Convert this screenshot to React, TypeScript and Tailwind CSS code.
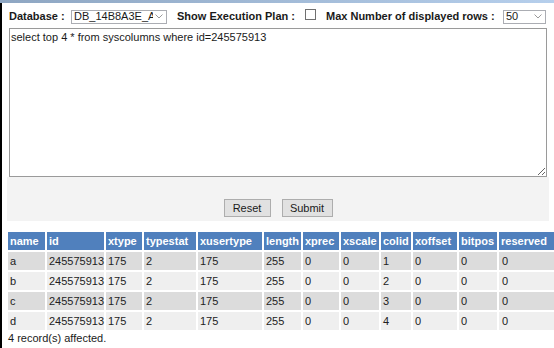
import React from "react";

const cols: { name: string; w: string }[] = [
  { name: "name", w: "w-[37px]" },
  { name: "id", w: "w-[57px]" },
  { name: "xtype", w: "w-[36px]" },
  { name: "typestat", w: "w-[52px]" },
  { name: "xusertype", w: "w-[64px]" },
  { name: "length", w: "w-[37px]" },
  { name: "xprec", w: "w-[36px]" },
  { name: "xscale", w: "w-[38px]" },
  { name: "colid", w: "w-[30px]" },
  { name: "xoffset", w: "w-[44px]" },
  { name: "bitpos", w: "w-[38px]" },
  { name: "reserved", w: "w-[70px]" },
];

const rows = [
  ["a", "245575913", "175", "2", "175", "255", "0", "0", "1", "0", "0", "0"],
  ["b", "245575913", "175", "2", "175", "255", "0", "0", "2", "0", "0", "0"],
  ["c", "245575913", "175", "2", "175", "255", "0", "0", "3", "0", "0", "0"],
  ["d", "245575913", "175", "2", "175", "255", "0", "0", "4", "0", "0", "0"],
];

function Chevron() {
  return (
    <svg width="8" height="5" viewBox="0 0 8 5" className="shrink-0">
      <polyline points="0.5,0.5 4,4 7.5,0.5" fill="none" stroke="#9a9a9a" strokeWidth="1" />
    </svg>
  );
}

export default function App() {
  return (
    <div
      className="w-[554px] h-[348px] overflow-hidden bg-white text-[11px] leading-[13px] text-[#1a1a1a]"
      style={{ fontFamily: '"Liberation Sans", Arial, sans-serif' }}
    >
      <div className="h-[3px] bg-gradient-to-r from-[#8ea6c2] to-[#b6cfec]" />
      <div className="h-[345px] border-l-2 border-black">
        <div className="ml-[5px] w-[542px]">
          {/* toolbar */}
          <div className="h-[25px] pt-[2px] pl-[2px] flex items-center">
            <span className="w-[62px] font-bold">Database :</span>
            <div className="w-[96px] h-[14px] border border-[#abadb3] flex items-center pl-[2px] pr-[3px] gap-[2px]">
              <span className="flex-1 overflow-hidden whitespace-nowrap">DB_14B8A3E_AA</span>
              <Chevron />
            </div>
            <span className="ml-[10px] w-[128px] font-bold">Show Execution Plan :</span>
            <div className="w-[11px] h-[11px] border border-[#707070] bg-white mb-[4px]" />
            <span className="ml-[10px] w-[177px] font-bold whitespace-nowrap">Max Number of displayed rows :</span>
            <div className="w-[43px] h-[14px] border border-[#abadb3] flex items-center pl-[2px] pr-[3px]">
              <span className="flex-1">50</span>
              <Chevron />
            </div>
          </div>
          {/* textarea */}
          <div className="pl-[2px]">
            <textarea
              className="block w-[538px] h-[149px] border border-[#9a9a9a] px-[1px] pt-[2px] text-[11px] leading-[13px] text-[#1a1a1a] outline-none"
              style={{ fontFamily: '"Liberation Sans", Arial, sans-serif' }}
              defaultValue="select top 4 * from syscolumns where id=245575913"
            />
          </div>
          {/* buttons panel */}
          <div className="h-[44px] bg-[#f3f3f3] flex items-end justify-center gap-[11px] pb-[4px]">
            <button className="w-[47px] h-[18px] bg-[#e1e1e1] border border-[#adadad] text-[11px] leading-[13px] text-[#1a1a1a]">
              Reset
            </button>
            <button className="w-[51px] h-[18px] bg-[#e1e1e1] border border-[#adadad] text-[11px] leading-[13px] text-[#1a1a1a]">
              Submit
            </button>
          </div>
        </div>
        {/* results table */}
        <div className="mt-[9px] ml-[4px] w-[560px]">
          <table className="table-fixed border-separate border-spacing-[2px] w-[565px]">
            <thead>
              <tr>
                {cols.map((c) => (
                  <th
                    key={c.name}
                    className={`${c.w} h-[18px] bg-[#5080bd] text-white font-bold text-left px-[2px] py-0 whitespace-nowrap overflow-hidden`}
                  >
                    {c.name}
                  </th>
                ))}
              </tr>
            </thead>
            <tbody>
              {rows.map((r, i) => (
                <tr key={i} className={i % 2 === 0 ? "bg-[#dcdcdc]" : "bg-[#efefef]"}>
                  {r.map((v, j) => (
                    <td key={j} className="h-[18px] px-[2px] py-0 text-left whitespace-nowrap text-[#222]">
                      {j === 11 ? <span className="pl-[1px]">{v}</span> : v}
                    </td>
                  ))}
                </tr>
              ))}
            </tbody>
          </table>
          <div className="pl-[2px] text-[#1a1a1a]">4 record(s) affected.</div>
        </div>
      </div>
    </div>
  );
}
